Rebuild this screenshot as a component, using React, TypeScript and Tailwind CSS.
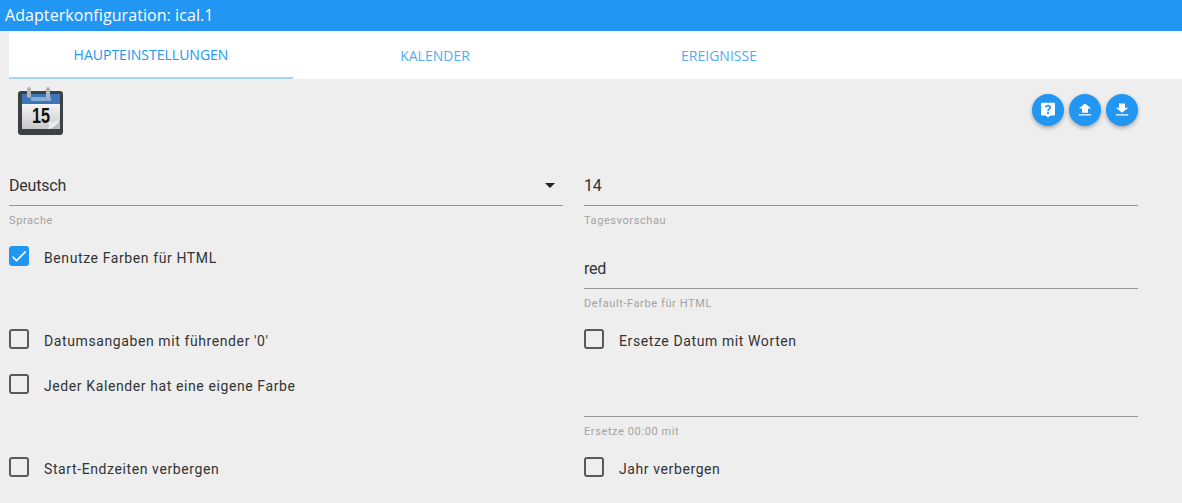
const roboto = "font-['Roboto',sans-serif]";

function Field({ value, label, arrow, className = "" }: { value: string; label: string; arrow?: boolean; className?: string }) {
    return (
        <div className={className}>
            <div className="h-[41px] border-b border-[#949494] flex items-center justify-between pt-[1px] text-[16px] tracking-[-0.2px] text-[#333]">
                <span>{value}</span>
                {arrow && <span className="mr-[8px] border-x-[5px] border-t-[5px] border-x-transparent border-t-[#222]"></span>}
            </div>
            <div className="mt-[7px] text-[11px] leading-[16px] tracking-[0.6px] text-[#a3a3a3]">{label}</div>
        </div>
    );
}

function Check({ label, checked }: { label: string; checked?: boolean }) {
    return (
        <div className="flex items-start">
            <div className={`w-[20px] h-[20px] rounded-[3px] flex items-center justify-center mt-[1px] ${checked ? "bg-[#2196f3]" : "border-2 border-[#5a5a5a]"}`}>
                {checked && (
                    <svg viewBox="0 0 24 24" className="w-[20px] h-[20px]" fill="#fff">
                        <path d="M9 16.17 5.53 12.7a1 1 0 0 0-1.41 1.41l4.18 4.18a1 1 0 0 0 1.41 0L20.29 7.71a1 1 0 0 0-1.41-1.41z" />
                    </svg>
                )}
            </div>
            <span className="ml-[15px] mt-[2px] text-[14px] leading-[22px] tracking-[0.6px] text-[#333]">{label}</span>
        </div>
    );
}

function RoundButton({ d }: { d: string }) {
    return (
        <button className="w-[32px] h-[32px] rounded-full bg-[#2196f3] flex items-center justify-center shadow-[0_2px_4px_rgba(0,0,0,0.3)]">
            <svg viewBox="0 0 24 24" className="w-[24px] h-[24px]" fill="#fff" fillRule="evenodd">
                <path d={d} />
            </svg>
        </button>
    );
}

function CalendarIcon() {
    return (
        <svg viewBox="0 0 50 50" className="w-[50px] h-[50px]">
            <defs>
                <linearGradient id="page" x1="0" y1="0" x2="0" y2="1">
                    <stop offset="0" stopColor="#f4f4f4" />
                    <stop offset="1" stopColor="#c8c8c8" />
                </linearGradient>
            </defs>
            <rect x="2" y="5" width="45" height="44" rx="3" fill="#3c4144" />
            <rect x="6" y="8" width="38" height="10" fill="#3f76b8" />
            <rect x="6" y="18" width="38" height="25" fill="url(#page)" />
            <rect x="15" y="11" width="20" height="4" fill="#a9c4e4" opacity="0.7" />
            <path d="M33 43 44 32v11z" fill="#bdbdbd" />
            <path d="M32 43c2-3 1-7 1-7 4 1 8 0 11-4-1 5-5 10-12 11z" fill="#ededed" />
            <rect x="11" y="1" width="4" height="11" rx="2" fill="#b5b5b5" />
            <rect x="30" y="1" width="4" height="11" rx="2" fill="#b5b5b5" />
            <text x="16" y="37" fontSize="22" fontWeight="700" fill="#111" textLength="18" lengthAdjust="spacingAndGlyphs" fontFamily="Liberation Sans, sans-serif">15</text>
        </svg>
    );
}

export default function App() {
    return (
        <div className="w-[1182px] h-[503px] overflow-hidden bg-[#eeeeee] font-['Open_Sans',sans-serif]">
            {/* Title */}
            <div className="h-[31px] bg-[#2196f3] pl-[5px] text-white text-[16px] tracking-[0.07px] leading-[31px]">Adapterkonfiguration: ical.1</div>

            {/* Tabs */}
            <div className="ml-[9px] h-[48px] bg-white flex text-[14px] text-[#2196f3]">
                <div className="w-[284px] flex items-center justify-center border-b-2 border-[#a6d5fa]">HAUPTEINSTELLUNGEN</div>
                <div className="w-[284px] flex items-center justify-center text-[#53adf5]">KALENDER</div>
                <div className="w-[284px] flex items-center justify-center text-[#53adf5]">EREIGNISSE</div>
            </div>

            <div className={`pl-[9px] w-[1138px] ${roboto}`}>
                <div className="h-[86px] flex items-start justify-between">
                    <div className="mt-[7px] ml-[7px]"><CalendarIcon /></div>
                    <div className="flex gap-[5px] mt-[15px]">
                        <RoundButton d="M6 4.700h12a1 1 0 0 1 1 1v10.800a1 1 0 0 1-1 1h-3.600L12 19.600l-2.400-2.100H6a1 1 0 0 1-1-1V5.700a1 1 0 0 1 1-1zM11 14.200h2v1.800h-2zM12 6.800c-1.800 0-3 1.200-3 2.800h1.700c0-.7.5-1.200 1.300-1.200s1.300.5 1.300 1.100c0 .5-.3.8-.7 1.100-.9.7-1.300 1.200-1.300 2.600h1.600c0-1 .3-1.300.9-1.800.6-.5 1.200-1 1.200-2 0-1.500-1.300-2.600-3-2.600z" />
                        <RoundButton d="M12 5.400 18.200 10.400H15V14.700H9V10.400H5.800zM5.800 16.200h12.400v1.200H5.800z" />
                        <RoundButton d="M9 5.400h6v4.400h3.200L12 14.700 5.800 9.800H9zM5.800 16.200h12.400v1.200H5.800z" />
                    </div>
                </div>

                {/* Form */}
                <div className="grid grid-cols-[554px_554px] gap-x-[21px] grid-rows-[80px_83px_45px_83px_40px]">
                    <Field value="Deutsch" label="Sprache" arrow />
                    <Field value="14" label="Tagesvorschau" />
                    <Check label="Benutze Farben für HTML" checked />
                    <Field value="red" label="Default-Farbe für HTML" className="mt-[3px]" />
                    <Check label="Datumsangaben mit führender '0'" />
                    <Check label="Ersetze Datum mit Worten" />
                    <Check label="Jeder Kalender hat eine eigene Farbe" />
                    <Field value="" label="Ersetze 00:00 mit" className="mt-[3px]" />
                    <Check label="Start-Endzeiten verbergen" />
                    <Check label="Jahr verbergen" />
                </div>
            </div>
        </div>
    );
}
